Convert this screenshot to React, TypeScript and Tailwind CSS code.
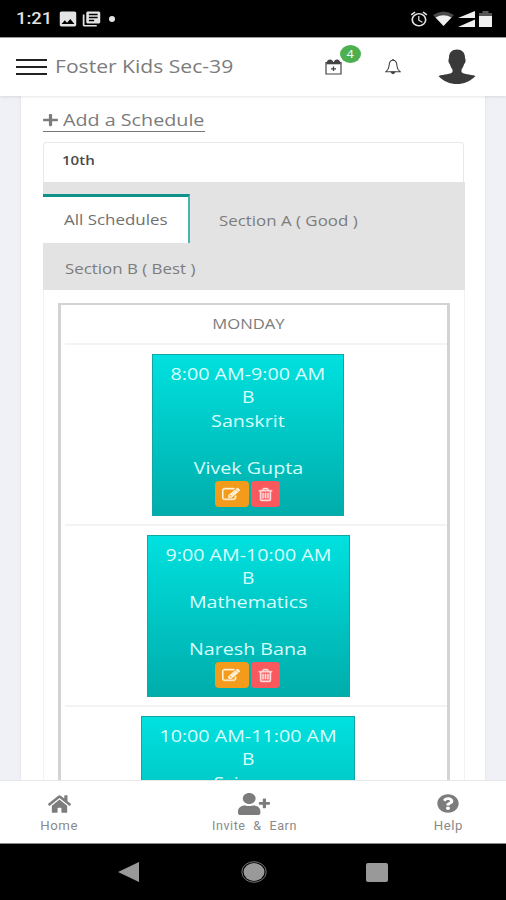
import React from 'react';
import { FaHome, FaPlus, FaQuestionCircle, FaUserPlus } from 'react-icons/fa';
import { MdAlarm, MdImage, MdLibraryBooks } from 'react-icons/md';

const schedules = [
  { time: '8:00 AM-9:00 AM', section: 'B', subject: 'Sanskrit', teacher: 'Vivek Gupta', width: 'w-[192px]' },
  { time: '9:00 AM-10:00 AM', section: 'B', subject: 'Mathematics', teacher: 'Naresh Bana', width: 'w-[203px]' },
  { time: '10:00 AM-11:00 AM', section: 'B', subject: 'Science', teacher: '', width: 'w-[214px]' },
];

const EditIcon = () => (
  <svg viewBox="0 0 1792 1792" preserveAspectRatio="none" className="w-[18px] h-[15px]" fill="currentColor" stroke="currentColor" strokeWidth="50">
    <path d="M888 1184l116-116-152-152-116 116v56h96v96h56zm440-720q-16-16-33 1l-350 350q-17 17-1 33t33-1l350-350q17-17 1-33zm80 594v190q0 119-84.5 203.5t-203.5 84.5h-832q-119 0-203.5-84.5t-84.5-203.5v-832q0-119 84.5-203.5t203.5-84.5h832q63 0 117 25 15 7 18 23 3 17-9 29l-49 49q-14 14-32 8-23-6-45-6h-832q-66 0-113 47t-47 113v832q0 66 47 113t113 47h832q66 0 113-47t47-113v-126q0-13 9-22l64-64q15-15 35-7t20 29zm-96-738l288 288-672 672h-288v-288zm444 132l-92 92-288-288 92-92q28-28 68-28t68 28l152 152q28 28 28 68t-28 68z" />
  </svg>
);

const TrashIcon = () => (
  <svg viewBox="0 0 1792 1792" preserveAspectRatio="none" className="w-[17px] h-[15px]" fill="currentColor" stroke="currentColor" strokeWidth="50">
    <path d="M704 736v576q0 14-9 23t-23 9h-64q-14 0-23-9t-9-23v-576q0-14 9-23t23-9h64q14 0 23 9t9 23zm256 0v576q0 14-9 23t-23 9h-64q-14 0-23-9t-9-23v-576q0-14 9-23t23-9h64q14 0 23 9t9 23zm256 0v576q0 14-9 23t-23 9h-64q-14 0-23-9t-9-23v-576q0-14 9-23t23-9h64q14 0 23 9t9 23zm128 724v-948h-896v948q0 22 7 40.5t14.5 27 10.5 8.5h832q3 0 10.5-8.5t14.5-27 7-40.5zm-672-1076h448l-48-117q-7-9-17-11h-317q-10 2-17 11zm928 32v64q0 14-9 23t-23 9h-96v948q0 83-47 143.5t-113 60.5h-832q-66 0-113-58.5t-47-141.5v-952h-96q-14 0-23-9t-9-23v-64q0-14 9-23t23-9h309l70-167q15-37 54-63t79-26h320q40 0 79 26t54 63l70 167h309q14 0 23 9t9 23z" />
  </svg>
);

const StatusBar = () => (
  <div className="h-[37px] shrink-0 bg-black flex items-center pl-[16px] pr-[14px] text-[#e4e4e4]">
    <span className="w-[41px] font-['Roboto',sans-serif] text-[16px] font-medium leading-none">
      <span className="inline-block origin-left scale-x-[1.15]">1:21</span>
    </span>
    <MdImage className="w-[22px] h-[20px]" preserveAspectRatio="none" />
    <MdLibraryBooks className="w-[21px] h-[18px] ml-[2px]" preserveAspectRatio="none" />
    <span className="w-[6px] h-[6px] ml-[7px] rounded-full bg-[#e4e4e4]" />
    <div className="ml-auto flex items-center">
      <MdAlarm className="w-[20px] h-[18px]" preserveAspectRatio="none" />
      {/* wifi */}
      <svg width="21" height="15" viewBox="0 0 21 15" className="ml-[4px]">
        <path d="M0 4Q10.500-3 21 4L10.500 15Z" fill="#4a4a4a" />
        <path d="M2.500 6.500Q10.500 2 18.500 6.500L10.500 15Z" fill="#f0f0f0" />
      </svg>
      {/* dual sim signal */}
      <svg width="17" height="16" viewBox="0 0 17 16" className="ml-[4px]">
        <path d="M0 7L17 0V7Z" fill="#f0f0f0" />
        <path d="M0 16L17 8.500V16Z" fill="#f0f0f0" />
      </svg>
      <svg width="13" height="16" viewBox="0 0 13 16" className="ml-[4px]">
        <path d="M0 2H3.500V0H9.500V2H13V6H0Z" fill="#555" />
        <path d="M0 5H13V16H0Z" fill="#f0f0f0" />
      </svg>
    </div>
  </div>
);

const Header = () => (
  <header className="relative z-10 h-[59px] shrink-0 bg-white flex items-center shadow-[0_1px_3px_rgba(0,0,0,0.1)] border-t border-[#999]">
    <div className="ml-[16px] -mt-[1px] w-[31px] flex flex-col gap-[5px]">
      <span className="h-[2px] bg-[#222]" />
      <span className="h-[2px] bg-[#222]" />
      <span className="h-[2px] bg-[#222]" />
    </div>
    <h1 className="ml-[8px] -mt-[2px] w-[178px] text-[18px] leading-none text-[#7c7c7c] whitespace-nowrap">
      <span className="inline-block origin-left scale-x-[1.172]">Foster Kids Sec-39</span>
    </h1>
    <div className="relative ml-[92px]">
      <svg width="17" height="16" viewBox="0 0 17 16" fill="none" stroke="#444" className="block">
        <path d="M1 3.500H16V15H1Z" strokeWidth="1.200" />
        <path d="M1.500 4.500H15.500" strokeWidth="1.600" />
        <path d="M2.500 3.500Q3 1.200 5 1.200T7.500 3.500M9.500 3.500Q10 1.200 12 1.200T14.500 3.500" strokeWidth="1.600" fill="#444" />
        <path d="M8.500 7.500V12M6 9.800H11" strokeWidth="1.300" />
      </svg>
      <span className="absolute left-[15px] top-[-14px] w-[21px] h-[18px] rounded-[50%] bg-[#4caf50] text-white text-[11px] leading-[18px] text-center">
        <span className="inline-block scale-x-[1.15]">4</span>
      </span>
    </div>
    <svg width="16" height="16" viewBox="0 0 16 16" fill="none" stroke="#444" strokeWidth="1.100" className="ml-[43px]">
      <path d="M8 1.200C5 1.200 4.200 3.800 4.100 6.500C4 9.300 3 11 1 12.700H15C13 11 12 9.300 11.900 6.500C11.800 3.800 11 1.200 8 1.200Z" />
      <path d="M6.200 13Q8 16.500 9.800 13Z" fill="#444" />
      <path d="M7 .8H9" />
    </svg>
    <svg width="38" height="36" viewBox="0 0 38 36" className="ml-[37px]">
      <path
        d="M19 .5C24 .5 27 3.500 27 8.500C27 10 28 10.500 27.500 12.500C27 14.500 26.300 14.500 25.800 16C25.200 18 24 19.500 23.500 20.500V23C25 25.500 32 25 37.500 27C32 32.500 26 35 19 35S5.500 32.500 .5 27C6 25 13 25.500 14.500 23V20.500C13.500 19 12.500 17.500 12.200 16C11.500 14.500 11 14.500 10.500 12.500C10.200 10.500 11 10 11 8.500C11 3.500 14 .5 19 .5Z"
        fill="#3a3a3a"
      />
    </svg>
  </header>
);

const ScheduleCard = ({ item }: { item: (typeof schedules)[number] }) => (
  <div className="h-[181px] shrink-0 ml-[4px] pr-[16px] flex justify-center border-t-2 border-[#f3f3f3] pt-[9px]">
    <div
      className={`${item.width} h-[162px] flex flex-col items-center border border-[#12a5a5] bg-gradient-to-b from-[#00e1df] to-[#00adab] pt-[7.5px] text-[16px] leading-[23.7px] text-[#d8fffe] whitespace-nowrap`}
    >
      <div className="scale-x-[1.23]">{item.time}</div>
      <div className="scale-x-[1.2]">{item.section}</div>
      <div className="scale-x-[1.23]">{item.subject}</div>
      {item.teacher && <div className="mt-[23.700px] scale-x-[1.23]">{item.teacher}</div>}
      <div className="flex gap-[2px] pr-[1px]">
        <button className="w-[34px] h-[26px] rounded-[4px] bg-[#f39c1c] text-[#fff3dd] flex items-center justify-center pr-[2px]">
          <EditIcon />
        </button>
        <button className="w-[29px] h-[26px] rounded-[4px] bg-[#f9595d] text-[#ffdfe0] flex items-center justify-center pr-[1px]">
          <TrashIcon />
        </button>
      </div>
    </div>
  </div>
);

const BottomNav = () => (
  <nav className="relative z-10 h-[64px] shrink-0 bg-white border-t border-[#e8e8e8] border-b border-b-[#888] flex justify-between px-[32px] pt-[13px] text-[#7c7c7c] font-['Roboto',sans-serif] text-[12px] leading-[14px]">
    <div className="w-[54px] flex flex-col items-center">
      <FaHome className="w-[23px] h-[20px]" preserveAspectRatio="none" />
      <span className="mt-[5px] tracking-[0.500px] scale-x-[1.1] text-[#8a8a8a]">Home</span>
    </div>
    <div className="flex flex-col items-center">
      <FaUserPlus className="w-[32px] h-[22px] -mt-[1px]" preserveAspectRatio="none" />
      <span className="mt-[4px] tracking-[0.500px] [word-spacing:4px] scale-x-[1.05] text-[#8a8a8a]">Invite & Earn</span>
    </div>
    <div className="w-[52px] flex flex-col items-center">
      <FaQuestionCircle className="w-[22px] h-[19px]" preserveAspectRatio="none" />
      <span className="mt-[6px] tracking-[0.500px] scale-x-[1.1] text-[#8a8a8a]">Help</span>
    </div>
  </nav>
);

const SystemNav = () => (
  <div className="h-[56px] shrink-0 bg-black flex items-center pl-[118px]">
    <svg width="21" height="20" viewBox="0 0 21 20">
      <path d="M0 10L21 0V20Z" fill="#999" />
    </svg>
    <svg width="26" height="22" viewBox="0 0 26 22" className="ml-[102px]">
      <ellipse cx="13" cy="11" rx="12.200" ry="10.300" fill="none" stroke="#777" />
      <ellipse cx="13" cy="11" rx="10.500" ry="9" fill="#999" />
    </svg>
    <span className="ml-[99px] w-[22px] h-[19px] rounded-[2px] bg-[#999]" />
  </div>
);

const App = () => {
  return (
    <div className="w-[506px] h-[900px] overflow-hidden flex flex-col bg-[#eff1f6] font-['Open_Sans',sans-serif]">
      <StatusBar />
      <Header />

      <main className="flex-1 min-h-0 overflow-hidden px-[21px] flex flex-col">
        <div className="flex-1 min-h-0 bg-white pl-[22px] pr-[20px] pt-[12px] flex flex-col shadow-[0_0_3px_rgba(0,0,0,0.08)]">
          <a className="w-[162px] h-[24px] shrink-0 border-b border-[#777] flex items-center text-[17px] leading-none text-[#7c7c7c] whitespace-nowrap">
            <FaPlus className="w-[15px] h-[14px] shrink-0" preserveAspectRatio="none" />
            <span className="ml-[5px] origin-left scale-x-[1.16]">Add a Schedule</span>
          </a>

          <div className="mt-[10px] mr-[1px] h-[40px] shrink-0 rounded-t-[4px] border border-b-0 border-[#e8e8e8] pl-[18px] text-[13px] leading-[34px] font-semibold text-[#4a4a4a]">
            <span className="inline-block origin-left scale-x-[1.16]">10th</span>
          </div>

          {/* Section tabs */}
          <div className="h-[108px] shrink-0 bg-[#e3e3e3] pt-[12px] flex flex-wrap content-start text-[14px] text-[#7c7c7c] whitespace-nowrap">
            <div className="w-[147px] h-[49px] bg-white border-t-[3px] border-r-2 border-t-[#0f918c] border-r-[#4db3ae] pl-[21px] leading-[45px] text-[#707070]">
              <span className="inline-block origin-left scale-x-[1.21]">All Schedules</span>
            </div>
            <div className="w-[200px] pl-[29px] leading-[53px] h-[49px]">
              <span className="inline-block origin-left scale-x-[1.205]">Section A ( Good )</span>
            </div>
            <div className="pl-[22px] leading-[52px] w-[200px] h-[47px]">
              <span className="inline-block origin-left scale-x-[1.205]">Section B ( Best )</span>
            </div>
          </div>

          <div className="flex-1 min-h-0 border-x border-[#f2f2f2] px-[14px] pt-[13px] flex flex-col">
            <div className="flex-1 min-h-0 overflow-hidden border-t-2 border-x-[3px] border-[#d3d3d3] flex flex-col">
              <div className="h-[38px] shrink-0 pr-[12px] text-center text-[14px] leading-[37px] text-[#7c7c7c]">
                <span className="inline-block scale-x-[1.19]">MONDAY</span>
              </div>
              {schedules.map((item) => (
                <ScheduleCard key={item.time} item={item} />
              ))}
            </div>
          </div>
        </div>
      </main>

      <BottomNav />
      <SystemNav />
    </div>
  );
};

export default App;
